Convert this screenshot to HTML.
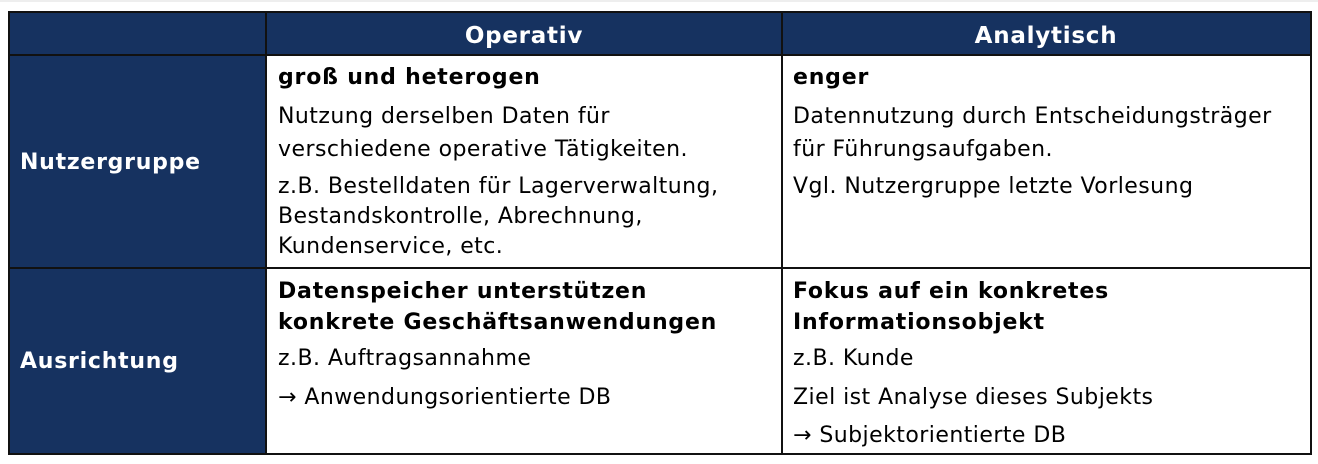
<!DOCTYPE html>
<html><head><meta charset="utf-8"><style>
body{margin:0;width:1318px;height:464px;background:#fff;position:relative;overflow:hidden;font-family:"DejaVu Sans","Liberation Sans",sans-serif;}
.b{position:absolute;background:#163260}
.l{position:absolute;background:#111}
.t{position:absolute;font-size:22px;color:#000;white-space:nowrap;letter-spacing:0.45px;line-height:26px;margin-top:1px}
.bo{font-weight:bold;letter-spacing:0.8px}
.w{color:#fff;font-weight:bold;letter-spacing:0.75px}
</style></head><body>
<div style="position:absolute;left:0;top:0;width:1318px;height:2px;background:#eee"></div>
<div class="b" style="left:8px;top:12px;width:1304px;height:43px"></div>
<div class="b" style="left:8px;top:55px;width:258px;height:399px"></div>
<div class="l" style="left:8px;top:11px;width:1304px;height:2px"></div>
<div class="l" style="left:8px;top:54px;width:1304px;height:2px"></div>
<div class="l" style="left:8px;top:267px;width:1304px;height:2px"></div>
<div class="l" style="left:8px;top:453px;width:1304px;height:2px"></div>
<div class="l" style="left:8px;top:11px;width:2px;height:444px"></div>
<div class="l" style="left:265px;top:11px;width:2px;height:444px"></div>
<div class="l" style="left:781px;top:11px;width:2px;height:444px"></div>
<div class="l" style="left:1310px;top:11px;width:2px;height:444px"></div>
<div class="t w" style="left:266px;width:516px;text-align:center;top:22px;font-size:23px">Operativ</div>
<div class="t w" style="left:782px;width:528px;text-align:center;top:22px;font-size:23px">Analytisch</div>
<div class="t w" style="left:20px;top:149px">Nutzergruppe</div>
<div class="t w" style="left:20px;top:348px">Ausrichtung</div>
<div class="t bo" style="left:278px;top:64px">groß und heterogen</div>
<div class="t" style="left:278px;top:103px">Nutzung derselben Daten für</div>
<div class="t" style="left:278px;top:136px">verschiedene operative Tätigkeiten.</div>
<div class="t" style="left:278px;top:173px">z.B. Bestelldaten für Lagerverwaltung,</div>
<div class="t" style="left:278px;top:203px">Bestandskontrolle, Abrechnung,</div>
<div class="t" style="left:278px;top:233px">Kundenservice, etc.</div>
<div class="t bo" style="left:793px;top:64px">enger</div>
<div class="t" style="left:793px;top:103px">Datennutzung durch Entscheidungsträger</div>
<div class="t" style="left:793px;top:136px">für Führungsaufgaben.</div>
<div class="t" style="left:793px;top:173px">Vgl. Nutzergruppe letzte Vorlesung</div>
<div class="t bo" style="left:278px;top:278px">Datenspeicher unterstützen</div>
<div class="t bo" style="left:278px;top:309px">konkrete Geschäftsanwendungen</div>
<div class="t" style="left:278px;top:345px">z.B. Auftragsannahme</div>
<div class="t" style="left:278px;top:384px">→ Anwendungsorientierte DB</div>
<div class="t bo" style="left:793px;top:278px">Fokus auf ein konkretes</div>
<div class="t bo" style="left:793px;top:309px">Informationsobjekt</div>
<div class="t" style="left:793px;top:345px">z.B. Kunde</div>
<div class="t" style="left:793px;top:384px">Ziel ist Analyse dieses Subjekts</div>
<div class="t" style="left:793px;top:422px">→ Subjektorientierte DB</div>
</body></html>
